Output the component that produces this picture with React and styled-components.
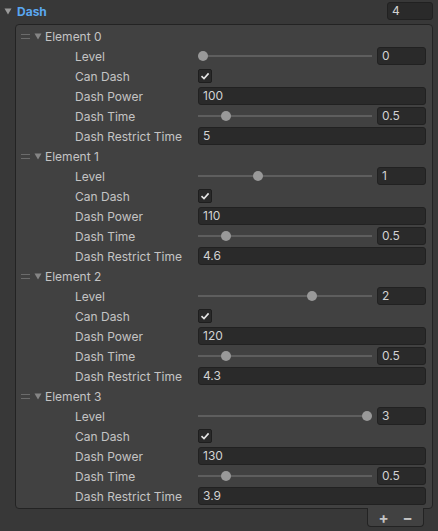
import styled, { createGlobalStyle } from 'styled-components';

const GlobalStyle = createGlobalStyle`
    html, body {
        margin: 0;
        padding: 0;
        background: #383838;
    }
    body {
        width: 438px;
        height: 531px;
        overflow: hidden;
        font-family: Inter, "Noto Sans", "Liberation Sans", sans-serif;
        font-size: 12px;
        color: #c4c4c4;
    }
`;

const StyledInspector = styled.div`
    width: 438px;
    display: flex;
    flex-direction: column;
`;

const StyledHeader = styled.div`
    height: 22px;
    display: flex;
    align-items: center;
    padding: 0 5px 0 4px;
    & > .title {
        margin-left: 5px;
        font-weight: 700;
        color: #5aa7f0;
        flex: 1;
    }
`;

const StyledFoldout = styled.svg`
    width: 8px;
    height: 7px;
    flex: none;
    & > polygon {
        fill: ${props => props.$color || '#9a9a9a'};
    }
`;

const StyledCountField = styled.div`
    width: 40px;
    height: 16px;
    background: #2a2a2a;
    border: 1px solid #212121;
    border-radius: 3px;
    padding-left: 4px;
    line-height: 16px;
    color: #d2d2d2;
`;

const StyledListBox = styled.div`
    margin: 2px 5px 0 15px;
    background: #414141;
    border: 1px solid #232323;
    border-radius: 4px;
    padding: 1px 0 2px 0;
`;

const StyledElementHeader = styled.div`
    height: 20px;
    display: flex;
    align-items: center;
    padding-left: 5px;
    & > .label {
        margin-left: 3px;
        color: #c4c4c4;
    }
`;

const StyledHandle = styled.span`
    width: 9px;
    height: 3px;
    border-top: 1px solid #6b6b6b;
    border-bottom: 1px solid #6b6b6b;
    margin-right: 4px;
`;

const StyledRow = styled.div`
    height: 20px;
    display: grid;
    grid-template-columns: 123px 1fr;
    align-items: center;
    padding: 0 6px 0 59px;
`;

const StyledField = styled.div`
    height: 16px;
    background: #2a2a2a;
    border: 1px solid #212121;
    border-radius: 3px;
    padding-left: 4px;
    line-height: 16px;
    color: #d2d2d2;
    width: ${props => props.$width || 'auto'};
`;

const StyledSlider = styled.div`
    display: flex;
    align-items: center;
    gap: 5px;
`;

const StyledTrack = styled.div`
    flex: 1;
    height: 2px;
    background: #5e5e5e;
    position: relative;
    & > .thumb {
        position: absolute;
        top: -4px;
        width: 10px;
        height: 10px;
        border-radius: 50%;
        background: #999999;
        margin-left: -5px;
    }
`;

const StyledCheckbox = styled.div`
    width: 12px;
    height: 12px;
    background: #2a2a2a;
    border: 1px solid #1e1e1e;
    border-radius: 2px;
    display: flex;
    align-items: center;
    justify-content: center;
`;

const StyledFooter = styled.div`
    align-self: flex-end;
    margin: -1px 14px 0 0;
    width: 55px;
    height: 18px;
    background: #414141;
    border: 1px solid #232323;
    border-top: none;
    border-radius: 0 0 4px 4px;
    display: flex;
    justify-content: center;
    gap: 10px;
    align-items: center;
    & > span {
        width: 14px;
        text-align: center;
        color: #c4c4c4;
        font-size: 15px;
        font-weight: 700;
        line-height: 15px;
    }
`;

const Foldout = ({ color }) => (
    <StyledFoldout viewBox='0 0 8 7' $color={color}>
        <polygon points='0.5,0.5 7.5,0.5 4,6.5' />
    </StyledFoldout>
);

const Slider = ({ value, min, max, text }) => {
    const t = (value - min) / (max - min);
    return (
        <StyledSlider>
            <StyledTrack>
                <div className='thumb' style={{ left: `calc(5px + (100% - 10px) * ${t})` }}></div>
            </StyledTrack>
            <StyledField $width='43px'>{text}</StyledField>
        </StyledSlider>
    );
};

const elements = [
    { level: 0, power: '100', time: 0.5, restrict: '5' },
    { level: 1, power: '110', time: 0.5, restrict: '4.6' },
    { level: 2, power: '120', time: 0.5, restrict: '4.3' },
    { level: 3, power: '130', time: 0.5, restrict: '3.9' },
];

const Element = ({ index, data }) => {
    return (
        <div>
            <StyledElementHeader>
                <StyledHandle />
                <Foldout color='#858585' />
                <span className='label'>Element {index}</span>
            </StyledElementHeader>
            <StyledRow>
                <span>Level</span>
                <Slider value={data.level} min={0} max={3} text={String(data.level)} />
            </StyledRow>
            <StyledRow>
                <span>Can Dash</span>
                <StyledCheckbox>
                    <svg width='10' height='10' viewBox='0 0 10 10'>
                        <path d='M1.5 5.2 L4 7.6 L8.6 2.4' fill='none' stroke='#e6e6e6' strokeWidth='1.6' />
                    </svg>
                </StyledCheckbox>
            </StyledRow>
            <StyledRow>
                <span>Dash Power</span>
                <StyledField>{data.power}</StyledField>
            </StyledRow>
            <StyledRow>
                <span>Dash Time</span>
                <Slider value={data.time} min={0} max={3.5} text={String(data.time)} />
            </StyledRow>
            <StyledRow>
                <span>Dash Restrict Time</span>
                <StyledField>{data.restrict}</StyledField>
            </StyledRow>
        </div>
    );
};

const App = () => {
    return (
        <StyledInspector>
            <GlobalStyle />
            <StyledHeader>
                <Foldout />
                <span className='title'>Dash</span>
                <StyledCountField>{elements.length}</StyledCountField>
            </StyledHeader>
            <StyledListBox>
                {elements.map((el, i) => <Element key={i} index={i} data={el} />)}
            </StyledListBox>
            <StyledFooter>
                <span>+</span>
                <span>−</span>
            </StyledFooter>
        </StyledInspector>
    );
};

export default App;
